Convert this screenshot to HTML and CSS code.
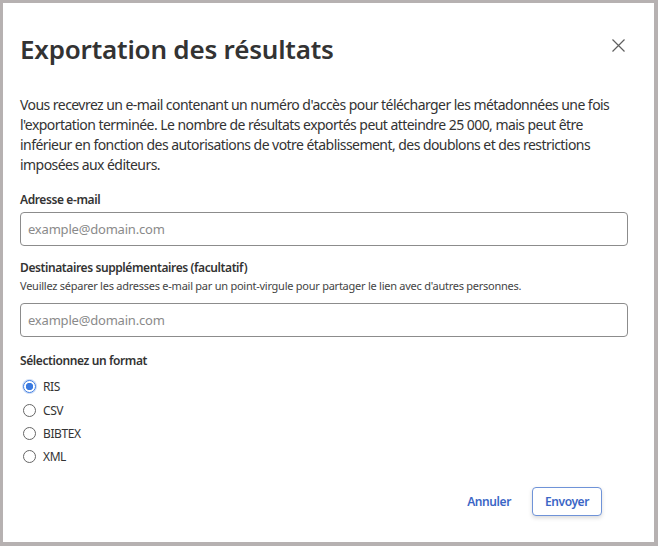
FILE: index.html
```html
<!DOCTYPE html>
<html lang="fr">
<head>
<meta charset="utf-8">
<link rel="stylesheet" href="styles.css">
</head>
<body>
<div class="dialog">
  <div class="header">
    <h1 class="title">Exportation des résultats</h1>
    <button class="close" aria-label="Fermer">
      <svg width="13" height="13" viewBox="0 0 13 13"><path d="M0.5 0.5L12.5 12.5M12.5 0.5L0.5 12.5" stroke="#5f5f5f" stroke-width="1.2" fill="none"/></svg>
    </button>
  </div>
  <p class="intro">Vous recevrez un e-mail contenant un numéro d'accès pour télécharger les métadonnées une fois l'exportation terminée. Le nombre de résultats exportés peut atteindre 25 000, mais peut être inférieur en fonction des autorisations de votre établissement, des doublons et des restrictions imposées aux éditeurs.</p>
  <div class="field">
    <label class="label">Adresse e-mail</label>
    <input class="input" type="text" placeholder="example@domain.com">
  </div>
  <div class="field field2">
    <label class="label">Destinataires supplémentaires (facultatif)</label>
    <div class="hint">Veuillez séparer les adresses e-mail par un point-virgule pour partager le lien avec d'autres personnes.</div>
    <input class="input input2" type="text" placeholder="example@domain.com">
  </div>
  <div class="formats">
    <div class="label">Sélectionnez un format</div>
    <label class="radio"><span class="dot checked"></span>RIS</label>
    <label class="radio"><span class="dot"></span>CSV</label>
    <label class="radio"><span class="dot"></span>BIBTEX</label>
    <label class="radio"><span class="dot"></span>XML</label>
  </div>
  <div class="actions">
    <button class="btn-link">Annuler</button>
    <button class="btn-outline">Envoyer</button>
  </div>
</div>
</body>
</html>
```
FILE: styles.css
```css
* { box-sizing: border-box; }
html, body { margin: 0; padding: 0; }
body {
  background: #b6b1b1;
  padding: 3px 4px 4px 3px;
  font-family: "Noto Sans", "Open Sans", sans-serif;
  color: #333;
  width: 658px;
  height: 546px;
}
.dialog {
  background: #fff;
  width: 651px;
  height: 539px;
  padding: 0 26px 0 17px;
}
.header {
  display: flex;
  justify-content: space-between;
  align-items: flex-start;
  padding-top: 28px;
}
.title {
  margin: 0;
  font-size: 26px;
  font-weight: 600;
  line-height: 36px;
  letter-spacing: -0.2px;
  color: #333;
}
.close {
  border: 0;
  background: none;
  padding: 0;
  margin: 8px 3px 0 0;
  width: 13px;
  height: 13px;
  display: flex;
}
.intro {
  margin: 28px 0 0;
  font-size: 14px;
  line-height: 20px;
  letter-spacing: -0.55px;
  color: #333;
}
.field { margin-top: 16px; display: flex; flex-direction: column; }
.field2 { margin-top: 13px; }
.label {
  font-size: 12px;
  font-weight: 600;
  line-height: 18px;
  letter-spacing: -0.4px;
  color: #333;
}
.hint {
  font-size: 11px;
  line-height: 18px;
  letter-spacing: -0.25px;
  color: #444;
}
.input {
  margin-top: 3px;
  height: 34px;
  width: 608px;
  border: 1px solid #8c8c8c;
  border-radius: 4px;
  padding: 0 7px;
  font-family: inherit;
  font-size: 13px;
  letter-spacing: -0.2px;
  color: #333;
}
.input2 { margin-top: 8px; }
.input::placeholder { color: #8a8a8a; }
.formats { margin-top: 15px; display: flex; flex-direction: column; }
.formats .label { margin-bottom: 5px; }
.radio {
  display: flex;
  align-items: center;
  gap: 7px;
  font-size: 12px;
  letter-spacing: -0.4px;
  height: 23.4px;
  color: #333;
  padding-left: 3px;
}
.dot {
  width: 13px;
  height: 13px;
  border: 1px solid #666;
  border-radius: 50%;
  display: inline-block;
}
.dot.checked {
  border: 1.5px solid #3b7ae0;
  background: radial-gradient(circle, #3b7ae0 0 3.4px, #fff 4px);
  box-shadow: 0 0 0 1px rgba(59,122,224,0.25);
}
.actions {
  display: flex;
  justify-content: flex-end;
  align-items: center;
  gap: 21px;
  margin-top: 18px;
  padding-right: 26px;
}
.btn-link {
  border: 0;
  background: none;
  font-family: inherit;
  font-size: 12px;
  letter-spacing: -0.4px;
  font-weight: 600;
  color: #3b66c6;
  padding: 0;
}
.btn-outline {
  border: 1px solid #6f93d8;
  background: #fff;
  border-radius: 4px;
  width: 70px;
  height: 29px;
  font-family: inherit;
  font-size: 12px;
  letter-spacing: -0.4px;
  font-weight: 600;
  color: #3b66c6;
  box-shadow: 0 2px 4px rgba(0,0,0,0.15);
}
```
